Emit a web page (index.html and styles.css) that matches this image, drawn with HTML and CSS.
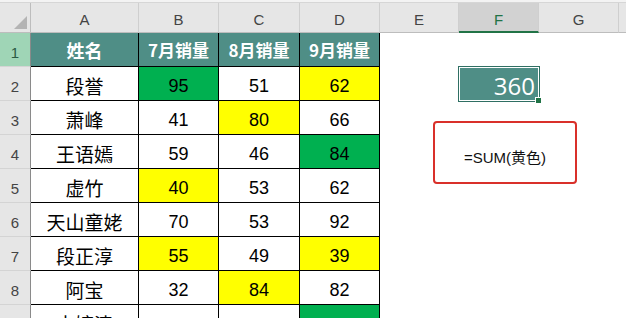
FILE: index.html
```html
<!DOCTYPE html>
<html lang="zh">
<head>
<meta charset="utf-8">
<link rel="stylesheet" href="styles.css">
</head>
<body>
<div class="top-strip"></div>
<div class="sheet">
  <div class="corner"><span class="tri"></span></div>
  <div class="ch">A</div><div class="ch">B</div><div class="ch">C</div><div class="ch">D</div>
  <div class="ch">E</div><div class="ch sel">F</div><div class="ch">G</div><div class="ch last"></div>

  <div class="rh rh-hl">1</div>
  <div class="c hd name">姓名</div><div class="c hd">7月销量</div><div class="c hd">8月销量</div><div class="c hd">9月销量</div>
  <div class="e"></div><div class="e"></div><div class="e"></div><div class="e"></div>

  <div class="rh">2</div>
  <div class="c name">段誉</div><div class="c num g">95</div><div class="c num">51</div><div class="c num y">62</div>
  <div class="e"></div><div class="e fsel"><span class="val">360</span><span class="handle"></span></div><div class="e"></div><div class="e"></div>

  <div class="rh">3</div>
  <div class="c name">萧峰</div><div class="c num">41</div><div class="c num y">80</div><div class="c num">66</div>
  <div class="e"></div><div class="e"></div><div class="e"></div><div class="e"></div>

  <div class="rh">4</div>
  <div class="c name">王语嫣</div><div class="c num">59</div><div class="c num">46</div><div class="c num g">84</div>
  <div class="e"></div><div class="e"></div><div class="e"></div><div class="e"></div>

  <div class="rh">5</div>
  <div class="c name">虚竹</div><div class="c num y">40</div><div class="c num">53</div><div class="c num">62</div>
  <div class="e"></div><div class="e"></div><div class="e"></div><div class="e"></div>

  <div class="rh">6</div>
  <div class="c name">天山童姥</div><div class="c num">70</div><div class="c num">53</div><div class="c num">92</div>
  <div class="e"></div><div class="e"></div><div class="e"></div><div class="e"></div>

  <div class="rh">7</div>
  <div class="c name">段正淳</div><div class="c num y">55</div><div class="c num">49</div><div class="c num y">39</div>
  <div class="e"></div><div class="e"></div><div class="e"></div><div class="e"></div>

  <div class="rh">8</div>
  <div class="c name">阿宝</div><div class="c num">32</div><div class="c num y">84</div><div class="c num">82</div>
  <div class="e"></div><div class="e"></div><div class="e"></div><div class="e"></div>

  <div class="rh"></div>
  <div class="c name">木婉清</div><div class="c num"></div><div class="c num"></div><div class="c num g"></div>
  <div class="e"></div><div class="e"></div><div class="e"></div><div class="e"></div>

  <div class="note">=SUM(黄色)</div>
</div>
</body>
</html>
```

FILE: styles.css
```css
html, body {
  margin: 0;
  padding: 0;
  background: #ffffff;
  overflow: hidden;
  width: 626px;
  height: 318px;
}

.top-strip {
  height: 2px;
  background: #f3f3f3;
  border-bottom: 1px solid #d6d6d6;
}

.sheet {
  position: relative;
  display: grid;
  grid-template-columns: 31px 108px 80px 81px 80px 79px 80px 80px 1fr;
  grid-template-rows: 30px repeat(9, 34px);
  font-family: "Liberation Sans", "Noto Sans CJK SC", sans-serif;
}

.sheet > div {
  box-sizing: border-box;
}

.corner {
  background: #e6e6e6;
  border-right: 1px solid #bdbdbd;
  border-bottom: 1px solid #bdbdbd;
  display: flex;
  align-items: flex-end;
  justify-content: flex-end;
  padding: 0 3px 3px 0;
}

.tri {
  width: 0;
  height: 0;
  border-left: 13px solid transparent;
  border-bottom: 13px solid #b4b4b4;
}

.ch {
  background: #e6e6e6;
  border-right: 1px solid #cfcfcf;
  border-bottom: 1px solid #bdbdbd;
  color: #444;
  font-size: 15px;
  display: flex;
  align-items: center;
  justify-content: center;
  padding-top: 4px;
}

.ch.sel {
  background: #d2d2d2;
  color: #217346;
  border-bottom: 2px solid #217346;
  padding-top: 5px;
}

.ch.last {
  border-right: none;
}

.rh {
  background: #e6e6e6;
  border-right: 1px solid #8a8a8a;
  border-bottom: 1px solid #d4d4d4;
  color: #444;
  font-size: 15px;
  display: flex;
  align-items: center;
  justify-content: center;
  padding-top: 5px;
}

.rh-hl {
  background: #9fd5b6;
  color: #2b5a44;
}

.c {
  border-right: 1px solid #000;
  border-bottom: 1px solid #000;
  display: flex;
  align-items: center;
  justify-content: center;
  color: #000;
  background: #fff;
}

.c.hd {
  background: #4f8e86;
  color: #fff;
  font-family: "Noto Sans CJK SC", sans-serif;
  font-weight: 700;
  font-size: 17px;
  border-right-color: #000;
}

.c.name {
  font-family: "Noto Sans CJK SC", sans-serif;
  font-size: 19px;
  padding-top: 3px;
}

.c.hd.name {
  font-size: 18px;
  padding-top: 0;
}

.c.num {
  font-size: 18px;
  padding-top: 5px;
}

.c.g {
  background: #00b050;
}

.c.y {
  background: #ffff00;
}

.e {
  background: #fff;
}

.fsel {
  position: relative;
  background: #4f8e86;
  box-shadow: 0 0 0 1px #2f6f63, inset 0 0 0 1px #ffffff;
  display: flex;
  align-items: center;
  justify-content: flex-end;
  padding: 3px 4px 0 0;
}

.val {
  font-family: "Open Sans", "Liberation Sans", sans-serif;
  font-weight: 400;
  font-size: 24px;
  color: #fff;
  line-height: 1;
}

.handle {
  position: absolute;
  right: -3px;
  bottom: -3px;
  width: 5px;
  height: 5px;
  background: #217346;
  border: 1px solid #fff;
}

.note {
  position: absolute;
  left: 433px;
  top: 118px;
  width: 144px;
  height: 63px;
  border: 2.5px solid #d9302a;
  border-radius: 4px;
  display: flex;
  align-items: center;
  justify-content: center;
  font-family: "Liberation Sans", "Noto Sans CJK SC", sans-serif;
  font-size: 15px;
  color: #111;
  padding-top: 8px;
}
```
